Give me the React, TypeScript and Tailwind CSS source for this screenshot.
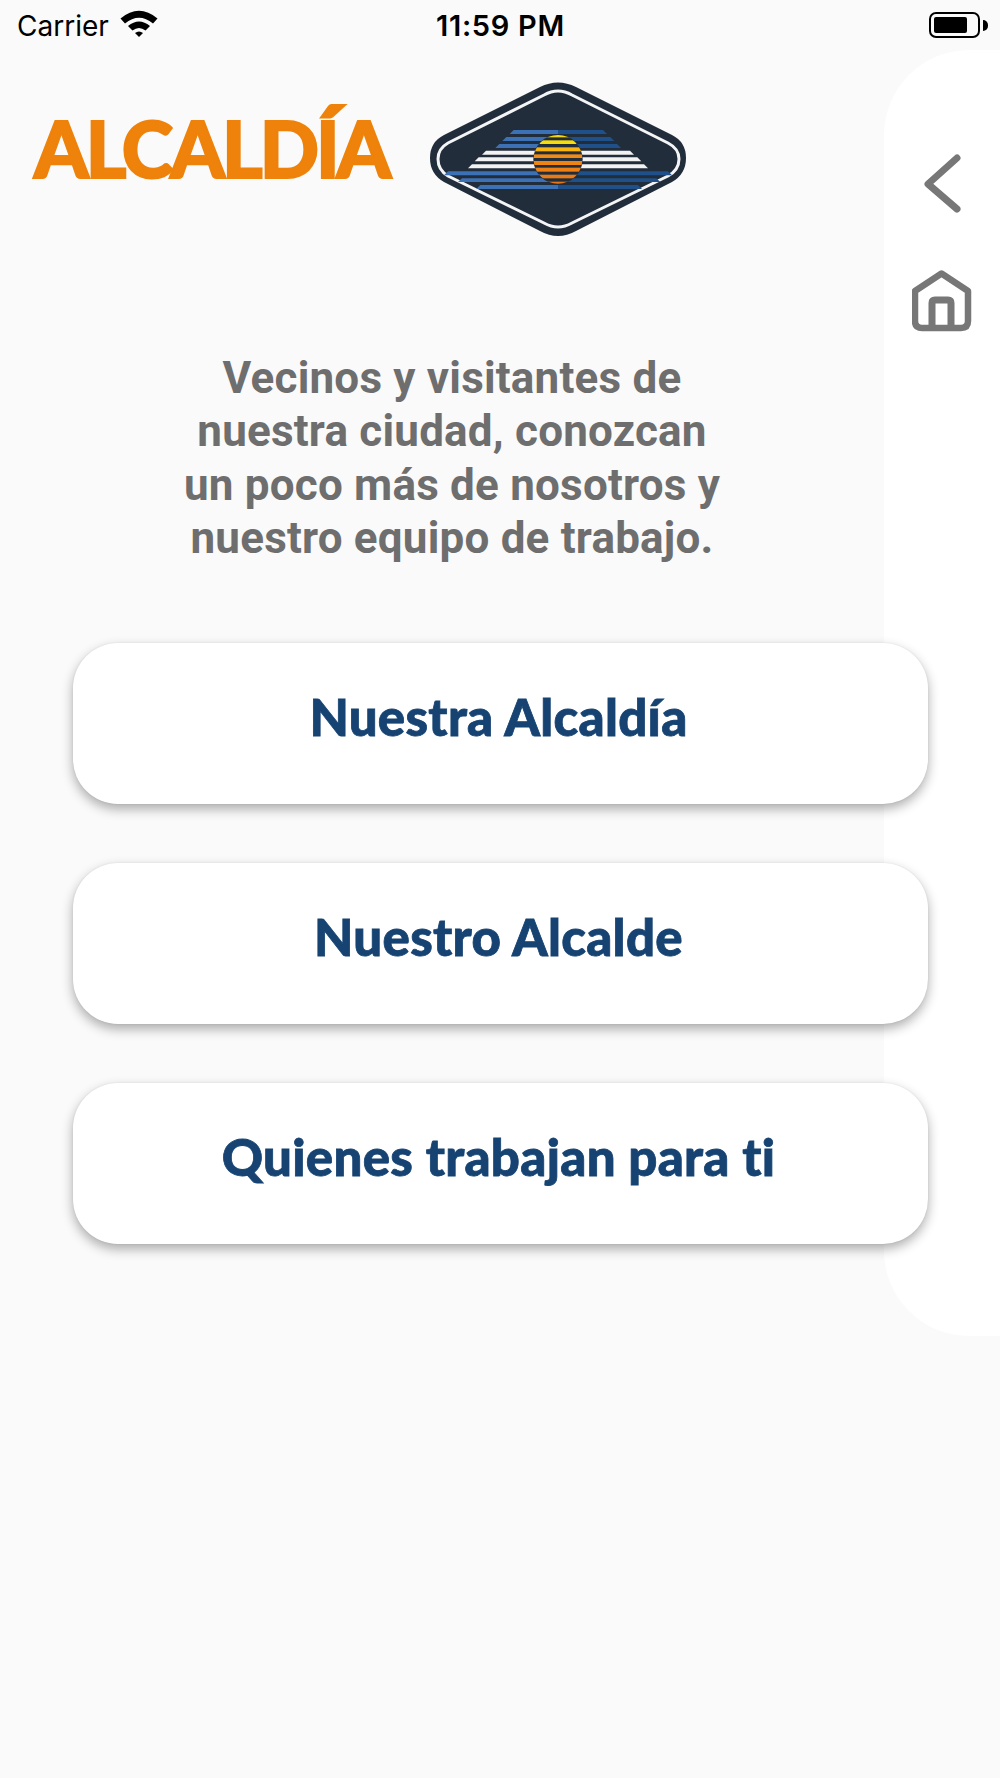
import React from 'react';

const topBlue = [
  { y: 210, h: 12, l: 305, r: 585 },
  { y: 231, h: 12, l: 283, r: 607 },
  { y: 252, h: 12, l: 262, r: 627 },
];
const white = [
  { y: 272, h: 12, l: 222, r: 666 },
  { y: 292, h: 12, l: 200, r: 688 },
  { y: 313, h: 12, l: 180, r: 708 },
];
const lowBlue = [
  { y: 334, h: 12, l: 108, r: 780 },
  { y: 355, h: 11, l: 150, r: 745 },
  { y: 375, h: 12, l: 205, r: 690 },
];
const sun = [
  { y: 225, h: 7, c: '#f5d90f' },
  { y: 241, h: 11, c: '#f7dc0c' },
  { y: 262, h: 12, c: '#f8b512' },
  { y: 283, h: 11, c: '#f08a12' },
  { y: 303, h: 12, c: '#ef8412' },
  { y: 323, h: 12, c: '#ee8014' },
  { y: 344, h: 11, c: '#e97a16' },
  { y: 365, h: 8, c: '#e47618' },
];

function Logo() {
  // coordinates are 3x the pixel size, same as the zoomed crop
  return (
    <svg width="300" height="190" viewBox="0 0 900 570" className="block shrink-0">
      <path
        d="M390 81 Q444 54 498 81 L786 225 Q828 246 828 294 Q828 342 786 366 L498 513 Q444 543 390 513 L102 366 Q60 342 60 294 Q60 246 102 225 Z"
        fill="#212d3a"
      />
      <path
        d="M402 105 Q444 81 486 105 L774 249 Q807 266 807 297 Q807 330 774 348 L486 489 Q444 513 402 489 L114 348 Q84 330 84 297 Q84 266 114 249 Z"
        fill="none"
        stroke="#f4f5f6"
        strokeWidth="9"
      />
      <defs>
        <clipPath id="sun-clip">
          <circle cx="444" cy="298" r="73" />
        </clipPath>
      </defs>
      {[...topBlue, ...lowBlue].map((s) => (
        <g key={s.y}>
          <polygon
            points={`${s.l + 6},${s.y} 444,${s.y} 444,${s.y + s.h} ${s.l - 6},${s.y + s.h}`}
            fill="#3d71b5"
          />
          <polygon
            points={`444,${s.y} ${s.r - 6},${s.y} ${s.r + 6},${s.y + s.h} 444,${s.y + s.h}`}
            fill="#1f5089"
          />
        </g>
      ))}
      {white.map((s) => (
        <polygon
          key={s.y}
          points={`${s.l + 6},${s.y} ${s.r - 6},${s.y} ${s.r + 6},${s.y + s.h} ${s.l - 6},${s.y + s.h}`}
          fill="#f2f2f2"
        />
      ))}
      <circle cx="444" cy="298" r="74" fill="#212d3a" />
      <g clipPath="url(#sun-clip)">
        {sun.map((s) => (
          <rect key={s.y} x="360" y={s.y} width="170" height={s.h} fill={s.c} />
        ))}
      </g>
    </svg>
  );
}

function StatusBar() {
  return (
    <div className="relative z-10 flex h-[50px] items-start justify-between font-['Inter',sans-serif] text-black">
      <div className="ml-[17px] flex items-center gap-[11px] pt-[8px]">
        <span className="text-[28px] leading-[36px]">Carrier</span>
        <svg width="38" height="28" viewBox="0 0 38 28" className="mb-[6px]">
          <path d="M0.5 9.5 Q19 -6 37.5 9.5 L33 14.5 Q19 3 5 14.5 Z" fill="#000" />
          <path d="M8 17 Q19 8 30 17 L25.5 21.5 Q19 16.5 12.5 21.5 Z" fill="#000" />
          <path d="M15 24 Q19 21 23 24 L19 28 Z" fill="#000" />
        </svg>
      </div>
      <span className="absolute left-[436px] top-[8px] text-[29px] leading-[36px] font-semibold tracking-[0.7px]">11:59 PM</span>
      <div className="mr-[12px] mt-[12px] flex items-center gap-[3px]">
        <div className="h-[26px] w-[51px] rounded-[7px] border-2 border-black p-[3px] pr-[11px]">
          <div className="h-full w-full rounded-[2px] bg-black" />
        </div>
        <div className="h-[11px] w-[5px] rounded-r-full bg-black" />
      </div>
    </div>
  );
}

function SidePanel() {
  return (
    <div className="absolute right-0 top-[50px] flex h-[1286px] w-[116px] flex-col items-center rounded-l-[85px] bg-white pt-[104px]">
      <svg width="40" height="60" viewBox="0 0 40 60">
        <path d="M35 4 L6 30 L35 55" fill="none" stroke="#777777" strokeWidth="7" strokeLinecap="round" strokeLinejoin="round" />
      </svg>
      <svg width="60" height="62" viewBox="0 0 60 62" className="mt-[56px]">
        <path
          d="M29.5 3.5 L56 21 V51 Q56 58 49 58 H10 Q3 58 3 51 V21 Z"
          fill="none"
          stroke="#777777"
          strokeWidth="6.5"
          strokeLinejoin="round"
        />
        <path d="M20 58 V33 Q20 30 23 30 H36 Q39 30 39 33 V58" fill="none" stroke="#777777" strokeWidth="7" />
      </svg>
    </div>
  );
}

const buttons = ['Nuestra Alcaldía', 'Nuestro Alcalde', 'Quienes trabajan para ti'];

export default function App() {
  return (
    <div className="relative h-[1778px] w-[1000px] overflow-hidden bg-[#fafafa]">
      <SidePanel />
      <StatusBar />
      <div className="relative z-10 flex h-[190px] items-center pl-[34px] pt-[20px]">
        <span className="mb-[14px] w-[376px] font-['Lato',sans-serif] text-[78px] leading-none font-black tracking-[-3px] text-[#ee820a] [-webkit-text-stroke:2px_#ee820a]">ALCALDÍA</span>
        <Logo />
      </div>
      <p className="relative z-10 mt-[112px] w-[904px] text-center font-['Roboto',sans-serif] text-[44px] leading-[53.3px] font-bold tracking-[0.2px] text-[#6e6e6e]">
        Vecinos y visitantes de
        <br />
        nuestra ciudad, conozcan
        <br />
        un poco más de nosotros y
        <br />
        nuestro equipo de trabajo.
      </p>
      <div className="relative z-10 mt-[78px] ml-[73px] flex w-[855px] flex-col gap-[59px]">
        {buttons.map((label) => (
          <div
            key={label}
            className="h-[161px] rounded-[45px] bg-white pt-[44px] pr-[4px] text-center font-['Lato',sans-serif] text-[51px] leading-[60px] font-black tracking-[0.3px] text-[#164372] shadow-[0_5px_12px_rgba(0,0,0,0.32),0_0_2px_rgba(0,0,0,0.08)] [-webkit-text-stroke:0.8px_#164372]"
          >
            {label}
          </div>
        ))}
      </div>
    </div>
  );
}
